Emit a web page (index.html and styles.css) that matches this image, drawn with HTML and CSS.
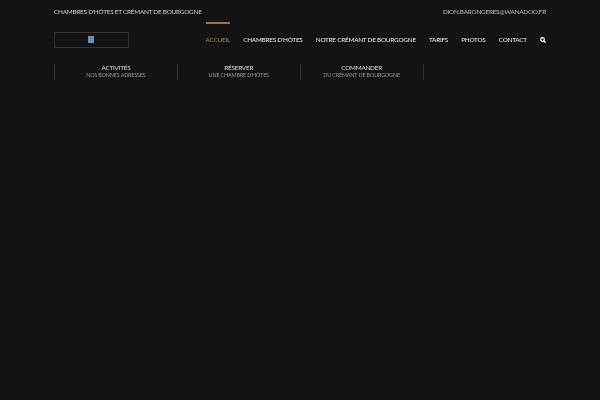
FILE: index.html
```html
<!DOCTYPE html>
<html lang="fr">
<head>
<meta charset="utf-8">
<title>Chambres d'hôtes</title>
<link rel="stylesheet" href="styles.css">
</head>
<body>
<div class="wrap">
  <div class="topbar">
    <span>CHAMBRES D'HÔTES ET CRÉMANT DE BOURGOGNE</span>
    <span class="mail">DION.BARONGERES@WANADOO.FR</span>
  </div>
  <header class="header">
    <a class="logo"><span class="logo-img"></span></a>
    <nav class="nav">
      <a class="active">ACCUEIL</a>
      <a>CHAMBRES D'HÔTES</a>
      <a>NOTRE CRÉMANT DE BOURGOGNE</a>
      <a>TARIFS</a>
      <a>PHOTOS</a>
      <a>CONTACT</a>
      <svg class="search" width="6" height="6" viewBox="0 0 12 12"><circle cx="5" cy="5" r="3.6" fill="none" stroke="#fff" stroke-width="2.4"/><path d="M7.8 7.8L11 11" stroke="#fff" stroke-width="2.8"/></svg>
    </nav>
  </header>
  <div class="blocks">
    <div class="block"><b>ACTIVITÉS</b><small>NOS BONNES ADRESSES</small></div>
    <div class="block"><b>RÉSERVER</b><small>UNE CHAMBRE D'HÔTES</small></div>
    <div class="block"><b>COMMANDER</b><small>DU CRÉMANT DE BOURGOGNE</small></div>
  </div>
</div>
</body>
</html>
```
FILE: styles.css
```css
* { box-sizing: border-box; }
html, body { margin: 0; height: 100%; }
body { background: #131313; font-family: Lato, sans-serif; color: #ddd; overflow: hidden; }
.wrap { width: 492px; margin: 0 auto 0 54px; will-change: opacity; }
.topbar { display: flex; justify-content: space-between; height: 22px; padding-top: 7px; font-size: 6.4px; letter-spacing: -0.24px; line-height: 9px; color: #cfcfcf; }
.mail { color: #bcbcbc; }
.header { display: flex; justify-content: space-between; align-items: center; height: 35px; }
.logo { display: flex; align-items: center; justify-content: center; width: 75px; height: 16px; border: 1px solid #333; }
.logo-img { width: 6px; height: 7px; margin-left: -2px; background: #5b93c8; }
.nav { display: flex; align-items: center; gap: 13.2px; height: 100%; font-size: 6.4px; letter-spacing: -0.24px; color: #ececec; }
.nav a { display: flex; align-items: center; height: 100%; }
.nav .active { color: #a98a5e; border-top: 2px solid #94774f; padding-bottom: 2px; }
.blocks { display: flex; width: 369.5px; margin-top: 7px; border-right: 1px solid #333; }
.block { flex: 1; height: 16px; border-left: 1px solid #333; text-align: center; display: flex; flex-direction: column; align-items: center; }
.block b { font-weight: 400; font-size: 6.4px; letter-spacing: -0.24px; line-height: 7px; color: #dedede; }
.block small { font-size: 5.4px; letter-spacing: -0.14px; line-height: 8px; color: #999; }
```
